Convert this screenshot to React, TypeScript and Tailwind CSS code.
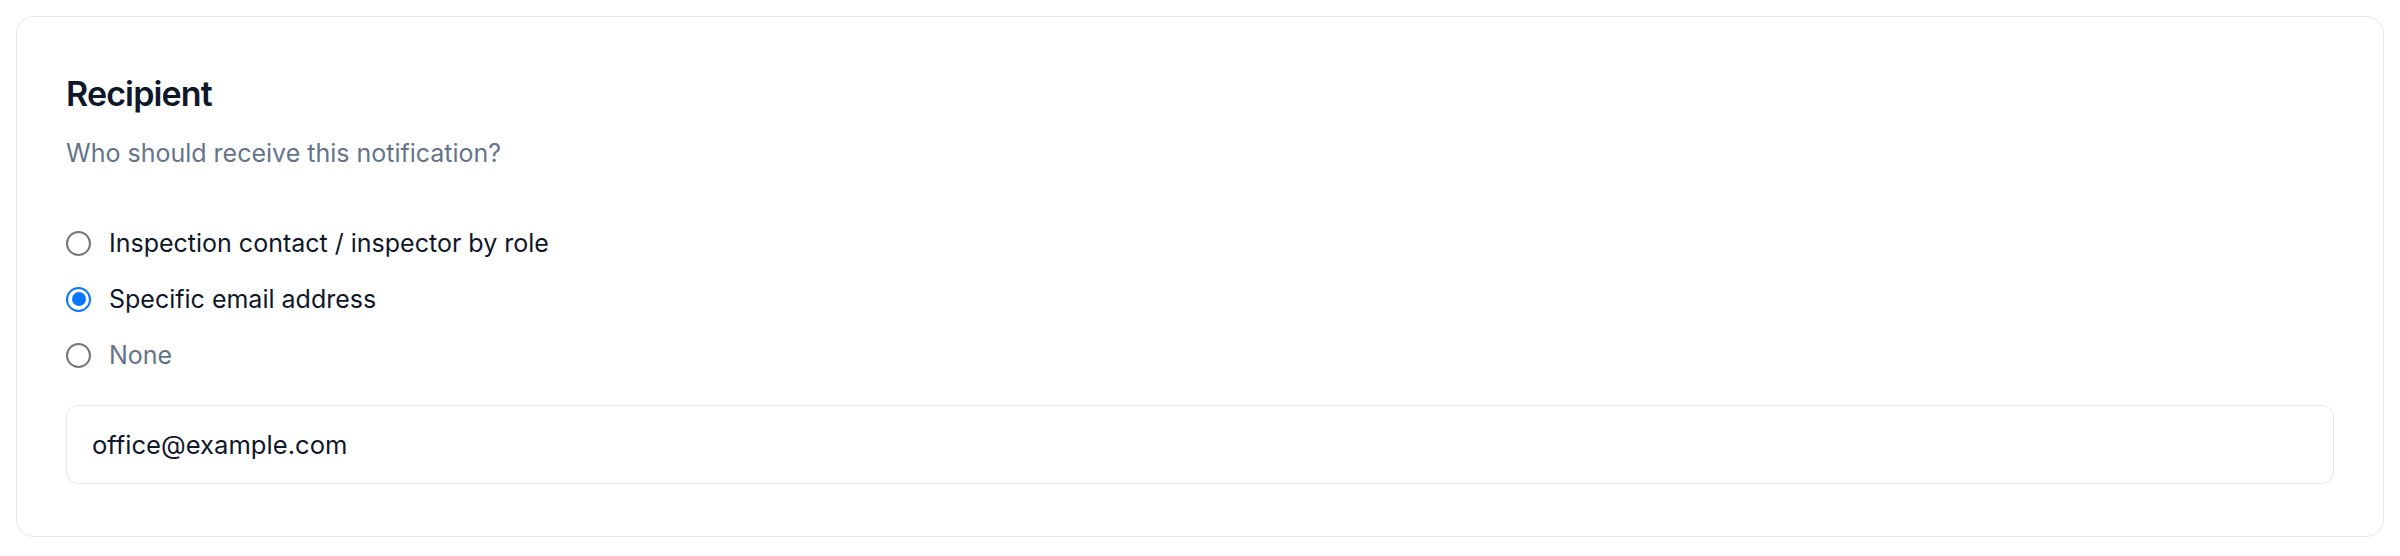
import { useState } from "react";

type Choice = "role" | "email" | "none";

const options: { value: Choice; label: string; muted?: boolean }[] = [
  { value: "role", label: "Inspection contact / inspector by role" },
  { value: "email", label: "Specific email address" },
  { value: "none", label: "None", muted: true },
];

function Radio({ checked }: { checked: boolean }) {
  return checked ? (
    <span className="flex h-[25px] w-[25px] shrink-0 items-center justify-center rounded-full border-[2.5px] border-[#0b76ff] bg-white">
      <span className="h-[14px] w-[14px] rounded-full bg-[#0b76ff]" />
    </span>
  ) : (
    <span className="h-[25px] w-[25px] shrink-0 rounded-full border-[2px] border-[#767676] bg-white" />
  );
}

export default function App() {
  const [choice, setChoice] = useState<Choice>("email");
  const [email, setEmail] = useState("office@example.com");

  return (
    <div className="min-h-[556px] bg-white p-4 font-['Inter','Noto_Sans',sans-serif]">
      <section className="rounded-[18px] border border-[#e2e8f0] bg-white px-[49px] pb-[52px] pt-[57px]">
        <h2 className="text-[34px] font-semibold leading-[40px] tracking-tight text-[#0f172a]">
          Recipient
        </h2>
        <p className="mt-[21px] text-[25px] leading-[36px] text-[#64748b]">
          Who should receive this notification?
        </p>

        <div className="mt-[54px] flex flex-col gap-[20px]">
          {options.map((o) => (
            <label
              key={o.value}
              className="flex h-[36px] cursor-pointer items-center gap-[18px]"
              onClick={() => setChoice(o.value)}
            >
              <Radio checked={choice === o.value} />
              <span
                className={
                  o.muted
                    ? "text-[25px] leading-[36px] text-[#64748b]"
                    : "text-[25px] leading-[36px] text-[#0f172a]"
                }
              >
                {o.label}
              </span>
            </label>
          ))}
        </div>

        <input
          type="email"
          value={email}
          onChange={(e) => setEmail(e.target.value)}
          className="mt-[32px] block h-[79px] w-full rounded-[12px] border border-[#e2e8f0] bg-white px-[25px] text-[25.6px] text-[#0f172a] outline-none"
        />
      </section>
    </div>
  );
}
